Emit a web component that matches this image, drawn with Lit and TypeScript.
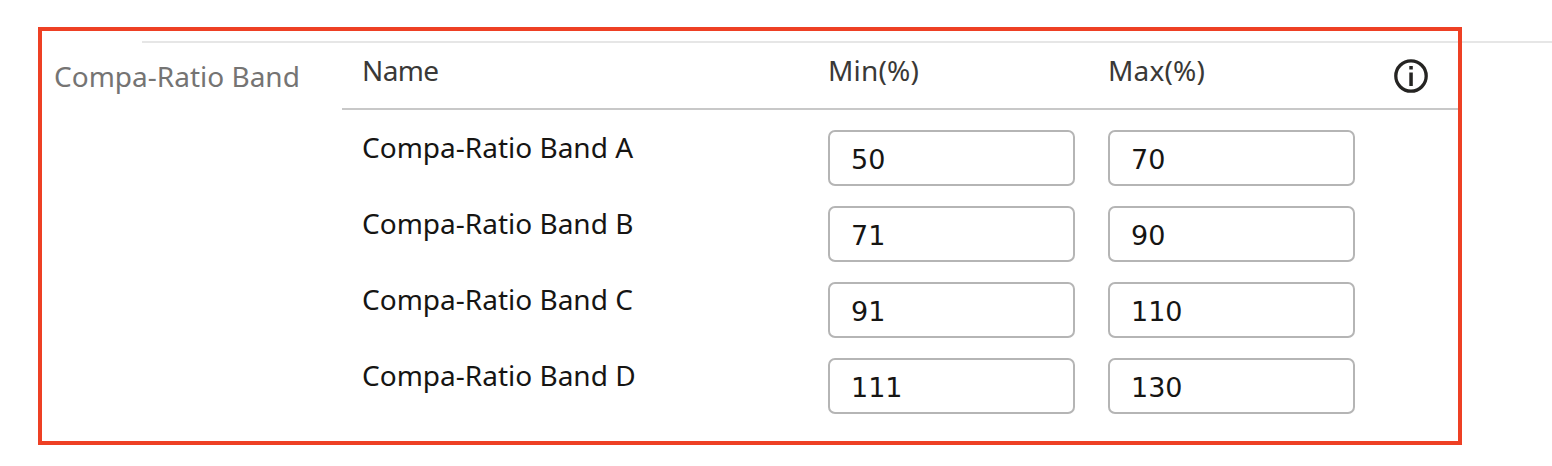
import { LitElement, html, css } from "lit";
import { customElement, property } from "lit/decorators.js";

interface Band {
  name: string;
  min: string;
  max: string;
}

const BANDS: Band[] = [
  { name: "Compa-Ratio Band A", min: "50", max: "70" },
  { name: "Compa-Ratio Band B", min: "71", max: "90" },
  { name: "Compa-Ratio Band C", min: "91", max: "110" },
  { name: "Compa-Ratio Band D", min: "111", max: "130" },
];

@customElement("band-field")
class BandField extends LitElement {
  static styles = css`
    :host {
      display: block;
      width: 247px;
      height: 56px;
    }
    .field {
      box-sizing: border-box;
      display: block;
      width: 100%;
      height: 100%;
      margin: 0;
      padding: 2px 20px 0 21px;
      border: 2px solid #b5b5b5;
      border-radius: 7px;
      outline: none;
      background: #fff;
      color: #161513;
      font: 27px "DejaVu Sans", sans-serif;
    }
  `;
  @property() value = "";
  render() {
    return html`<input class="field" .value=${this.value} />`;
  }
}

@customElement("app-root")
class AppRoot extends LitElement {
  static styles = css`
    :host {
      display: grid;
      width: 1552px;
      height: 466px;
      background: #fff;
      color: #161513;
      font: 28px/38px "Noto Sans", sans-serif;
      overflow: hidden;
    }
    .divider {
      grid-area: 1 / 1;
      height: 2px;
      margin: 41px 0 0 142px;
      background: #e6e6e6;
    }
    .panel {
      grid-area: 1 / 1;
      box-sizing: border-box;
      display: grid;
      grid-template-columns: 300px 1fr;
      width: 1424px;
      height: 418px;
      margin: 27px 0 0 38px;
      border: 4px solid #ee4024;
      z-index: 1;
    }
    .label {
      padding: 26px 0 0 12px;
      color: #757473;
      white-space: nowrap;
    }
    .head,
    .row {
      box-sizing: border-box;
      display: grid;
      grid-template-columns: 466px 280px 286px 34px;
      padding-left: 20px;
    }
    .head {
      height: 79px;
      padding-top: 20px;
      border-bottom: 2px solid #c8c8c8;
      color: #3a3937;
      letter-spacing: 0.2px;
    }
    .head-name {
      letter-spacing: -0.6px;
    }
    .icon {
      display: block;
      width: 34px;
      height: 34px;
      margin-top: 8px;
    }
    .rows {
      display: grid;
      gap: 20px;
      padding-top: 20px;
    }
    .row {
      height: 56px;
    }
    .name {
      height: 38px;
      margin-top: -2px;
      white-space: nowrap;
    }
  `;
  render() {
    return html`
      <div class="divider"></div>
      <section class="panel">
        <div class="label">Compa-Ratio Band</div>
        <div class="table">
          <div class="head">
            <span class="head-name">Name</span>
            <span>Min(%)</span>
            <span>Max(%)</span>
            <svg class="icon" viewBox="0 0 34 34" fill="none">
              <circle cx="17" cy="17" r="15.2" stroke="#252422" stroke-width="3.3" />
              <path d="M15.3 7h3.5v3.5h-3.5zM15.3 13.5h3.5V27h-3.5z" fill="#252422" />
            </svg>
          </div>
          <div class="rows">
            ${BANDS.map(
              (b) => html`<div class="row">
                <span class="name">${b.name}</span>
                <band-field .value=${b.min}></band-field>
                <band-field .value=${b.max}></band-field>
              </div>`
            )}
          </div>
        </div>
      </section>
    `;
  }
}
